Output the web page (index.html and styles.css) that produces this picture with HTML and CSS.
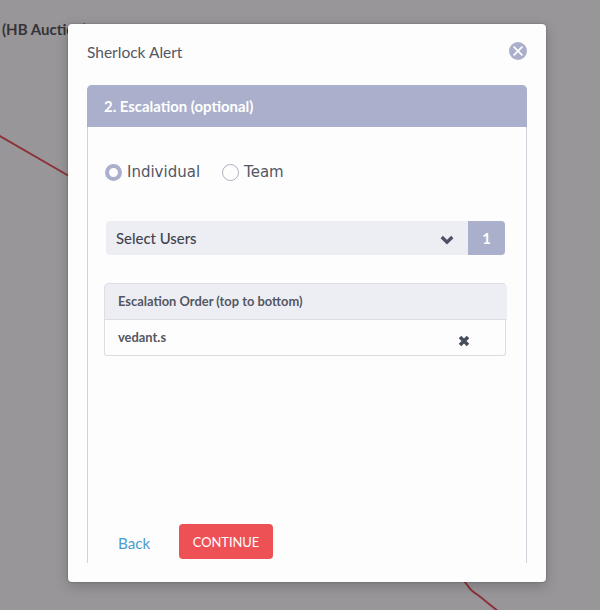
FILE: index.html
```html
<!DOCTYPE html>
<html lang="en">
<head>
<meta charset="utf-8">
<title>Sherlock Alert</title>
<link rel="stylesheet" href="styles.css">
</head>
<body>
<div class="backdrop">
  <svg class="chart" viewBox="0 0 600 610" aria-hidden="true">
    <path d="M-2 135L69 176M464 581L468 586Q471 591 478 595L499 612"/>
  </svg>
  <div class="chart-title">(HB Auction)</div>
</div>
<main class="modal">
  <header class="modal-head">
    <h1>Sherlock Alert</h1>
    <button class="close" aria-label="Close"><svg viewBox="0 0 18 18"><circle cx="9" cy="9" r="9"/><path d="M4.6 4.6l8.8 8.8M13.4 4.6l-8.8 8.8"/></svg></button>
  </header>
  <section class="panel">
    <h2>2. Escalation (optional)</h2>
    <div class="choices">
      <label class="choice"><span class="radio checked"></span>Individual</label>
      <label class="choice"><span class="radio"></span>Team</label>
    </div>
    <div class="select">
      <span class="select-label">Select Users</span>
      <svg class="chevron" viewBox="0 0 14 10"><path d="M1.7 2L7 7.1 12.3 2"/></svg>
      <span class="count">1</span>
    </div>
    <div class="order">
      <div class="order-head">Escalation Order (top to bottom)</div>
      <div class="order-row"><span>vedant.s</span><svg class="remove" viewBox="0 0 12 12"><path d="M2 2l8 8M10 2l-8 8"/></svg></div>
    </div>
    <footer class="actions">
      <a class="back">Back</a>
      <button class="continue">CONTINUE</button>
    </footer>
  </section>
</main>
</body>
</html>
```
FILE: styles.css
```css
* { box-sizing: border-box; }
body {
  margin: 0;
  width: 600px;
  height: 610px;
  overflow: hidden;
  padding: 24px 54px 28px 68px;
  background: #989698;
  font-family: Lato, sans-serif;
  color: #535763;
}
button { border: 0; padding: 0; font-family: inherit; }
h1, h2 { margin: 0; }
.backdrop { position: absolute; inset: 0; overflow: hidden; }
.chart { display: block; width: 600px; height: 610px; fill: none; stroke: #8d3238; stroke-width: 2; }
.chart-title { position: absolute; left: 2px; top: 20px; font-size: 15px; line-height: 18px; font-weight: 700; color: #353338; }
.modal {
  position: relative;
  width: 478px;
  height: 558px;
  padding: 0 18px 19px 19px;
  border-radius: 4px;
  background: #fefdfe;
  box-shadow: 0 4px 14px rgba(0, 0, 0, .2), 0 0 2px rgba(0, 0, 0, .35);
}
.modal-head { display: flex; height: 61px; align-items: center; justify-content: space-between; }
h1 { margin-top: -5px; font-size: 15.5px; line-height: 20px; font-weight: 400; }
.close { width: 18px; height: 18px; margin: -7px 1px 0 0; background: none; }
.close svg { display: block; fill: #aab0cb; }
.close path { stroke: #fff; stroke-width: 1.7; }
.panel { width: 440px; height: 478px; border: 1px solid #d0d1d9; border-top: 0; border-bottom: 0; border-radius: 5px 5px 0 0; display: flex; flex-direction: column; }
h2 { margin: 0 -1px; height: 42px; padding-left: 17px; border-radius: 5px 5px 0 0; background: #aab0cc; color: #fff; font-size: 14.9px; line-height: 43px; font-weight: 700; }
.choices { display: flex; gap: 22px; height: 20px; margin: 35px 0 0 17px; }
.choice { display: flex; align-items: center; gap: 5px; font: 15px/20px "DejaVu Sans", sans-serif; }
.radio { width: 17px; height: 17px; border: 1px solid #adb0bc; border-radius: 50%; }
.checked { border: 4.5px solid #aab0cc; }
.select { display: flex; align-items: center; width: 399px; height: 34px; margin: 39px 0 0 18px; border-radius: 4px; overflow: hidden; background: #edeef4; font-size: 14.9px; color: #3f424c; }
.select-label { flex: 1; padding-left: 10px; font-weight: 500; }
.chevron { width: 14px; height: 10px; margin: 3px 14px 0 0; fill: none; stroke: #4b5265; stroke-width: 3.4; }
.count { width: 37px; height: 34px; background: #aab0cc; color: #fff; font-weight: 700; line-height: 34px; text-align: center; }
.order { width: 402px; height: 73px; margin: 28px 0 0 16px; font-size: 12.9px; font-weight: 700; }
.order-head { width: 403px; height: 37px; padding-left: 13px; line-height: 35px; background: #edeef4; border: 1px solid #dddde2; border-right-color: #edeef4; border-radius: 5px 5px 0 0; }
.order-row { height: 36px; display: flex; justify-content: space-between; padding: 0 35px 0 13px; line-height: 35px; border: 1px solid #dddde0; border-top: 0; border-radius: 0 0 3px 3px; }
.remove { width: 12px; height: 12px; margin-top: 15px; fill: none; stroke: #464d5c; stroke-width: 3.6; }
.actions { display: flex; align-items: center; height: 35px; margin: auto 0 4px 30px; }
.back { width: 61px; padding-top: 2px; font-size: 15.2px; color: #4b9bcb; }
.continue { width: 94px; height: 35px; border-radius: 4px; background: #ed5156; color: #fff; font-size: 12.9px; }
```
